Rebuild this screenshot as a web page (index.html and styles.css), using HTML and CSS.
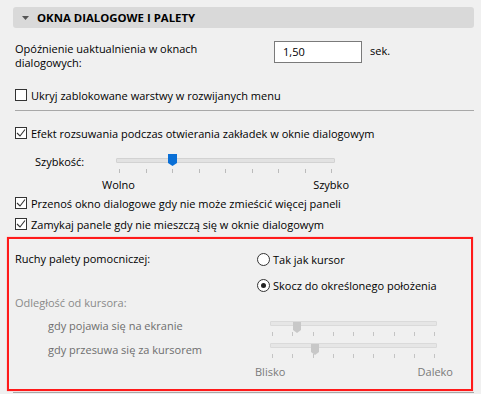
FILE: index.html
```html
<!DOCTYPE html>
<html lang="pl">
<head>
  <meta charset="UTF-8">
  <title>Okna dialogowe i palety</title>
  <link rel="stylesheet" href="styles.css">
</head>
<body>
  <div class="panel">
    <div class="panel-head">
      <svg class="caret" width="7" height="4" viewBox="0 0 7 4"><polygon points="0,0 7,0 3.5,4" fill="#555"/></svg>
      <span>OKNA DIALOGOWE I PALETY</span>
    </div>

    <div class="panel-body">
      <div class="delay-row">
        <div class="delay-label">Opóźnienie uaktualnienia w oknach dialogowych:</div>
        <div class="num-input">1,50</div>
        <div class="unit">sek.</div>
      </div>

      <label class="check check-first">
        <span class="box"></span>
        Ukryj zablokowane warstwy w rozwijanych menu
      </label>

      <div class="sep"></div>

      <label class="check check-after-sep">
        <span class="box"><svg width="12" height="12" viewBox="0 0 12 12"><polyline points="2,6 5,9 10,2.5" fill="none" stroke="#333" stroke-width="1.1"/></svg></span>
        Efekt rozsuwania podczas otwierania zakładek w oknie dialogowym
      </label>

      <div class="speed-row">
        <div class="speed-label">Szybkość:</div>
        <div class="slider blue-slider">
          <div class="track"></div>
          <svg class="thumb" style="left: 52px" width="9" height="12" viewBox="0 0 9 12"><polygon points="0,0 9,0 9,9 4.5,12 0,9" fill="#0a6fd6"/></svg>
          <div class="ticks"><i></i><i></i><i></i><i></i><i></i><i></i><i></i><i></i><i></i></div>
        </div>
      </div>
      <div class="speed-ends">
        <span>Wolno</span>
        <span>Szybko</span>
      </div>

      <label class="check check-tight">
        <span class="box"><svg width="12" height="12" viewBox="0 0 12 12"><polyline points="2,6 5,9 10,2.5" fill="none" stroke="#333" stroke-width="1.1"/></svg></span>
        Przenoś okno dialogowe gdy nie może zmieścić więcej paneli
      </label>
      <label class="check check-tight2">
        <span class="box"><svg width="12" height="12" viewBox="0 0 12 12"><polyline points="2,6 5,9 10,2.5" fill="none" stroke="#333" stroke-width="1.1"/></svg></span>
        Zamykaj panele gdy nie mieszczą się w oknie dialogowym
      </label>
    </div>

    <div class="highlight">
      <div class="move-row">
        <div class="move-label">Ruchy palety pomocniczej:</div>
        <div class="radios">
          <label class="radio"><span class="dot"></span>Tak jak kursor</label>
          <label class="radio radio-on"><span class="dot"></span>Skocz do określonego położenia</label>
        </div>
      </div>

      <div class="dist-title">Odległość od kursora:</div>

      <div class="dist-grid">
        <div class="dist-labels">
          <div>gdy pojawia się na ekranie</div>
          <div>gdy przesuwa się za kursorem</div>
        </div>
        <div class="dist-sliders">
          <div class="slider gray-slider">
            <div class="track"></div>
            <svg class="thumb" style="left: 23px" width="8" height="11" viewBox="0 0 8 11"><polygon points="0,0 8,0 8,8 4,11 0,8" fill="#c8c8c8"/></svg>
            <div class="ticks"><i></i><i></i><i></i><i></i><i></i><i></i><i></i><i></i><i></i></div>
          </div>
          <div class="slider gray-slider second">
            <div class="track"></div>
            <svg class="thumb" style="left: 41px" width="8" height="11" viewBox="0 0 8 11"><polygon points="0,0 8,0 8,8 4,11 0,8" fill="#c8c8c8"/></svg>
            <div class="ticks"><i></i><i></i><i></i><i></i><i></i><i></i><i></i><i></i><i></i></div>
          </div>
          <div class="dist-ends">
            <span>Blisko</span>
            <span>Daleko</span>
          </div>
        </div>
      </div>
    </div>
    <div class="bottom-line"></div>
  </div>
</body>
</html>
```

FILE: styles.css
```css
body {
  margin: 0;
  background: #f0f0f0;
  font-family: 'Open Sans', 'Noto Sans', sans-serif;
  font-size: 11px;
  color: #000;
}
.panel {
  padding: 7px 7px 0 13px;
  width: 461px;
}
.panel-head {
  display: flex;
  align-items: center;
  height: 21px;
  background: #d9d9d9;
  border-radius: 3px;
  font-weight: bold;
  font-size: 11.4px;
}
.caret {
  margin: 0 8px 0 9px;
}
.panel-body {
  padding-left: 2px;
}
.delay-row {
  display: flex;
  align-items: flex-start;
  margin-top: 13px;
}
.delay-label {
  width: 205px;
  line-height: 14px;
  margin-top: 1px;
  margin-right: 54px;
}
.num-input {
  width: 78px;
  height: 20px;
  padding-left: 8px;
  border: 1px solid #7a7a7a;
  background: #fff;
  line-height: 20px;
}
.unit {
  margin-left: 8px;
  line-height: 20px;
}
.check {
  display: flex;
  align-items: center;
  height: 14px;
}
.box {
  width: 10px;
  height: 10px;
  border: 1px solid #333;
  background: #fff;
  margin-right: 4px;
  position: relative;
}
.box svg {
  position: absolute;
  left: -1px;
  top: -1px;
}
.check-first {
  margin-top: 18px;
}
.sep {
  height: 1px;
  background: #a8a8a8;
  margin-top: 8px;
}
.check-after-sep {
  margin-top: 15px;
}
.speed-row {
  display: flex;
  margin-top: 14px;
}
.speed-label {
  width: 81px;
  margin-left: 20px;
  line-height: 14px;
  margin-top: 1px;
}
.slider {
  position: relative;
  width: 219px;
}
.track {
  height: 3px;
  margin-top: 4px;
  background: #e2e2e2;
  border: 1px solid #d2d2d2;
  border-radius: 1px;
}
.thumb {
  position: absolute;
  top: 0;
}
.ticks {
  display: flex;
  justify-content: space-between;
  padding: 0 3px;
  margin-top: 6px;
}
.ticks i {
  width: 1px;
  height: 4px;
  background: #bbb;
}
.speed-ends {
  display: flex;
  justify-content: space-between;
  width: 247px;
  margin: 5px 0 0 87px;
  line-height: 14px;
}
.check-tight {
  margin-top: 4px;
}
.check-tight2 {
  margin-top: 7px;
}
.highlight {
  margin: 6px 1px 0 -6px;
  border: 2px solid #ff1a1a;
  box-shadow: 0 0 1px #ff8080;
  height: 150px;
  padding: 0 0 0 6px;
}
.move-row {
  display: flex;
  margin-top: 13px;
}
.move-label {
  width: 242px;
  line-height: 14px;
}
.radios {
  display: flex;
  flex-direction: column;
  gap: 12px;
}
.radio {
  display: flex;
  align-items: center;
  height: 14px;
}
.dot {
  width: 11px;
  height: 11px;
  border: 1px solid #333;
  border-radius: 50%;
  background: #fff;
  margin-right: 3px;
  position: relative;
}
.radio-on .dot::after {
  content: "";
  position: absolute;
  left: 3px;
  top: 3px;
  width: 5px;
  height: 5px;
  border-radius: 50%;
  background: #222;
}
.dist-title {
  color: #8a8a8a;
  margin-top: 4px;
  line-height: 14px;
}
.dist-grid {
  display: flex;
  margin-top: 9px;
}
.dist-labels {
  color: #6e6e6e;
  width: 222px;
  padding-left: 33px;
  line-height: 14px;
  display: flex;
  flex-direction: column;
  gap: 10px;
}
.dist-sliders {
  width: 200px;
}
.gray-slider {
  width: 167px;
}
.gray-slider .thumb {
  top: 1px;
}
.gray-slider .track {
  background: #e6e6e6;
  border-color: #dadada;
  margin-top: 2px;
}
.gray-slider .ticks {
  padding: 0 2px;
  margin-top: 6px;
}
.gray-slider .ticks i {
  background: #c4c4c4;
}
.gray-slider.second {
  margin-top: 7px;
}
.dist-ends {
  display: flex;
  justify-content: space-between;
  width: 198px;
  margin-left: -15px;
  margin-top: 7px;
  color: #7a7a7a;
  line-height: 14px;
}
.bottom-line {
  height: 1px;
  background: #a8a8a8;
  margin-top: 1px;
}
```
